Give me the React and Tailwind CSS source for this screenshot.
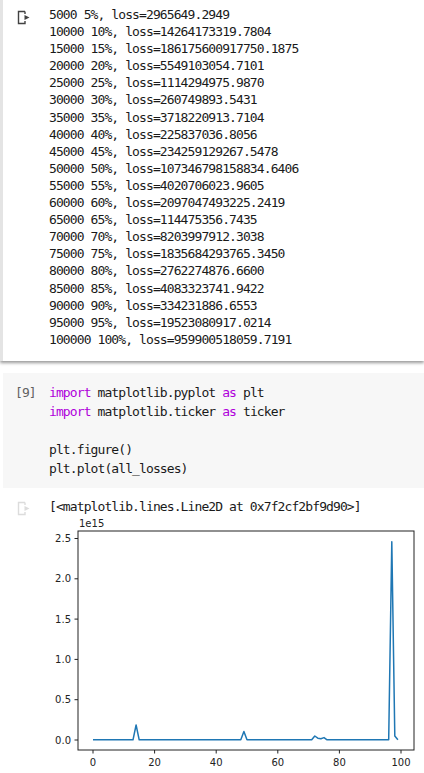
import React from 'react';

const outputLines = [
  '5000 5%, loss=2965649.2949',
  '10000 10%, loss=14264173319.7804',
  '15000 15%, loss=186175600917750.1875',
  '20000 20%, loss=5549103054.7101',
  '25000 25%, loss=1114294975.9870',
  '30000 30%, loss=260749893.5431',
  '35000 35%, loss=3718220913.7104',
  '40000 40%, loss=225837036.8056',
  '45000 45%, loss=234259129267.5478',
  '50000 50%, loss=107346798158834.6406',
  '55000 55%, loss=4020706023.9605',
  '60000 60%, loss=2097047493225.2419',
  '65000 65%, loss=114475356.7435',
  '70000 70%, loss=8203997912.3038',
  '75000 75%, loss=1835684293765.3450',
  '80000 80%, loss=2762274876.6600',
  '85000 85%, loss=4083323741.9422',
  '90000 90%, loss=334231886.6553',
  '95000 95%, loss=19523080917.0214',
  '100000 100%, loss=959900518059.7191',
];

const spikes = { 14: 0.186, 49: 0.107, 72: 0.05, 73: 0.022, 74: 0.016, 75: 0.03, 97: 2.46, 98: 0.05 };
const losses = Array.from({ length: 100 }, (_, i) => spikes[i] ?? 0.003);

const X0 = 93, DX = 3.08, Y0 = 225, DY = 80.6;
const px = i => X0 + i * DX;
const py = v => Y0 - v * DY;

function OutputIcon({ faded }) {
  const c = faded ? '#dcdcdc' : '#424242';
  return (
    <svg width="14" height="15" viewBox="0 0 14 15" className="shrink-0">
      <path d="M8 1.5 H1.5 V13.5 H8 V11" fill="none" stroke={c} strokeWidth="1.4" />
      <path d="M8 1.5 V4" fill="none" stroke={c} strokeWidth="1.4" />
      <path d="M7.5 5 L12.5 7.5 L7.5 10 Z" fill={c} />
    </svg>
  );
}

function Chart() {
  const pts = losses.map((v, i) => `${px(i).toFixed(1)},${py(v).toFixed(1)}`).join(' ');
  const yTicks = [0, 0.5, 1, 1.5, 2, 2.5];
  const xTicks = [0, 20, 40, 60, 80, 100];
  return (
    <svg width="424" height="258" viewBox="0 0 424 258" className="block" style={{ fontFamily: '"DejaVu Sans", sans-serif' }}>
      <rect x="78" y="16" width="336" height="219" fill="#fff" stroke="#222" strokeWidth="1" />
      <text x="79" y="12" fontSize="10" fill="#222">1e15</text>
      {yTicks.map(t => (
        <g key={t}>
          <line x1="74.5" x2="78" y1={py(t)} y2={py(t)} stroke="#222" strokeWidth="1" />
          <text x="71" y={py(t) + 3.5} fontSize="10" textAnchor="end" fill="#222">{t.toFixed(1)}</text>
        </g>
      ))}
      {xTicks.map(t => (
        <g key={t}>
          <line x1={px(t)} x2={px(t)} y1="235" y2="238.5" stroke="#222" strokeWidth="1" />
          <text x={px(t)} y="251" fontSize="10" textAnchor="middle" fill="#222">{t}</text>
        </g>
      ))}
      <polyline points={pts} fill="none" stroke="#1f77b4" strokeWidth="1.5" strokeLinejoin="round" />
    </svg>
  );
}

export default function App() {
  const mono = { fontFamily: '"DejaVu Sans Mono", monospace', fontSize: '13px', letterSpacing: '-0.9px' };
  const kw = 'text-[#af00db]';

  return (
    <div className="w-[424px] h-[773px] overflow-hidden bg-white text-[#1a1a1a]">
      {/* previous output */}
      <div className="relative bg-white border-l-[3px] border-l-[#e4e4e4] pl-[46px] pt-[6px] pb-[13px] shadow-[0_2px_3px_rgba(0,0,0,0.4)]" style={mono}>
        <div className="absolute left-[14px] top-[10px]"><OutputIcon /></div>
        {outputLines.map(l => (
          <div key={l} className="leading-[17.1px] whitespace-pre">{l}</div>
        ))}
      </div>

      {/* code cell */}
      <div className="mt-[12px] ml-[3px] bg-[#f7f7f7] pt-[10.5px] pb-[9.5px] flex" style={mono}>
        <div className="w-[46px] pl-[12px] text-[#616161] leading-[19px]">[9]</div>
        <div className="leading-[19px] whitespace-pre">
          <div><span className={kw}>import</span> matplotlib.pyplot <span className={kw}>as</span> plt</div>
          <div><span className={kw}>import</span> matplotlib.ticker <span className={kw}>as</span> ticker</div>
          <div>&nbsp;</div>
          <div>plt.figure()</div>
          <div>plt.plot(all_losses)</div>
        </div>
      </div>

      {/* output */}
      <div className="relative pt-[11px]">
        <div className="absolute left-[17px] top-[13px]"><OutputIcon faded /></div>
        <div className="pl-[49px] leading-[16px] whitespace-pre" style={mono}>[&lt;matplotlib.lines.Line2D at 0x7f2cf2bf9d90&gt;]</div>
        <Chart />
      </div>
    </div>
  );
}
